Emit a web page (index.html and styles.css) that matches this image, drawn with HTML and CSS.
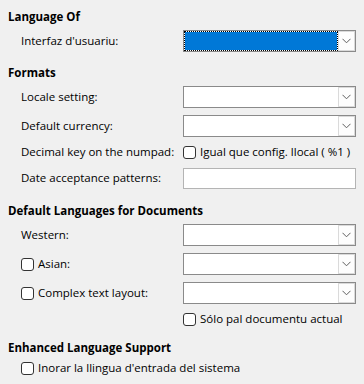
FILE: index.html
```html
<!DOCTYPE html>
<html>
  <head>
    <title>Language Settings</title>
    <meta charset="utf-8">
    <link rel="stylesheet" href="styles.css">
  </head>
  <body>
    <div class="page">

      <div class="heading">Language Of</div>
      <div class="group">
        <div class="row">
          <span class="label">Interfaz d'usuariu:</span>
          <div class="combo focused">
            <div class="field"></div>
            <div class="btn"><svg width="9" height="6" viewBox="0 0 9 6"><path d="M0.5 0.8 L4.5 4.8 L8.5 0.8" fill="none" stroke="#5f5f5f" stroke-width="1"/></svg></div>
          </div>
        </div>
      </div>

      <div class="heading">Formats</div>
      <div class="group wide">
        <div class="row">
          <span class="label">Locale setting:</span>
          <div class="combo">
            <div class="field"></div>
            <div class="btn"><svg width="9" height="6" viewBox="0 0 9 6"><path d="M0.5 0.8 L4.5 4.8 L8.5 0.8" fill="none" stroke="#5f5f5f" stroke-width="1"/></svg></div>
          </div>
        </div>
        <div class="row">
          <span class="label">Default currency:</span>
          <div class="combo">
            <div class="field"></div>
            <div class="btn"><svg width="9" height="6" viewBox="0 0 9 6"><path d="M0.5 0.8 L4.5 4.8 L8.5 0.8" fill="none" stroke="#5f5f5f" stroke-width="1"/></svg></div>
          </div>
        </div>
        <div class="row short">
          <span class="label">Decimal key on the numpad:</span>
          <label class="check"><span class="box"></span>Igual que config. llocal ( %1 )</label>
        </div>
        <div class="row">
          <span class="label">Date acceptance patterns:</span>
          <div class="textbox"></div>
        </div>
      </div>

      <div class="heading">Default Languages for Documents</div>
      <div class="group">
        <div class="row">
          <span class="label">Western:</span>
          <div class="combo">
            <div class="field"></div>
            <div class="btn"><svg width="9" height="6" viewBox="0 0 9 6"><path d="M0.5 0.8 L4.5 4.8 L8.5 0.8" fill="none" stroke="#5f5f5f" stroke-width="1"/></svg></div>
          </div>
        </div>
        <div class="row">
          <label class="check"><span class="box"></span>Asian:</label>
          <div class="combo">
            <div class="field"></div>
            <div class="btn"><svg width="9" height="6" viewBox="0 0 9 6"><path d="M0.5 0.8 L4.5 4.8 L8.5 0.8" fill="none" stroke="#5f5f5f" stroke-width="1"/></svg></div>
          </div>
        </div>
        <div class="row">
          <label class="check"><span class="box"></span>Complex text layout:</label>
          <div class="combo">
            <div class="field"></div>
            <div class="btn"><svg width="9" height="6" viewBox="0 0 9 6"><path d="M0.5 0.8 L4.5 4.8 L8.5 0.8" fill="none" stroke="#5f5f5f" stroke-width="1"/></svg></div>
          </div>
        </div>
        <div class="row short">
          <span class="label"></span>
          <label class="check"><span class="box"></span>Sólo pal documentu actual</label>
        </div>
      </div>

      <div class="heading">Enhanced Language Support</div>
      <div class="group last">
        <label class="check"><span class="box"></span>Inorar la llingua d'entrada del sistema</label>
      </div>

    </div>
  </body>
</html>
```

FILE: styles.css
```css
body {
  margin: 0;
  background-color: #f0f0f0;
  font-family: "Open Sans", "Noto Sans", "Liberation Sans", sans-serif;
  font-size: 11.5px;
  color: #000;
}
.page {
  padding: 9px 8px 0 8px;
}
.heading {
  font-weight: bold;
  height: 16px;
  line-height: 16px;
}
.group {
  padding-left: 13px;
  margin-top: 5px;
  margin-bottom: 13px;
  display: flex;
  flex-direction: column;
  gap: 7px;
}
.group.wide {
  margin-bottom: 14px;
}
.group.last {
  margin-top: 4px;
}
.row {
  display: grid;
  grid-template-columns: 162px 173px;
  align-items: center;
  min-height: 22px;
}
.row.short {
  min-height: 14px;
}
.label {
  line-height: 16px;
}
.combo {
  display: flex;
  height: 22px;
  box-sizing: border-box;
  border: 1px solid #8a8a8a;
  background-color: #fff;
}
.combo .field {
  flex: 1;
}
.combo.focused .field {
  border: 1px dotted #000;
  background: linear-gradient(#0078d7, #0078d7) padding-box, #fff border-box;
}
.combo .btn {
  width: 17px;
  box-sizing: border-box;
  border: 1px solid #dadada;
  background-color: #fdfdfd;
  display: flex;
  align-items: center;
  justify-content: center;
}
.textbox {
  height: 21px;
  box-sizing: border-box;
  border: 1px solid #b4b4b4;
  background-color: #fff;
}
.check {
  display: flex;
  align-items: center;
  gap: 4px;
  line-height: 16px;
}
.box {
  width: 13px;
  height: 13px;
  box-sizing: border-box;
  border: 1px solid #333;
  border-radius: 3px;
  background-color: #fff;
}
```
